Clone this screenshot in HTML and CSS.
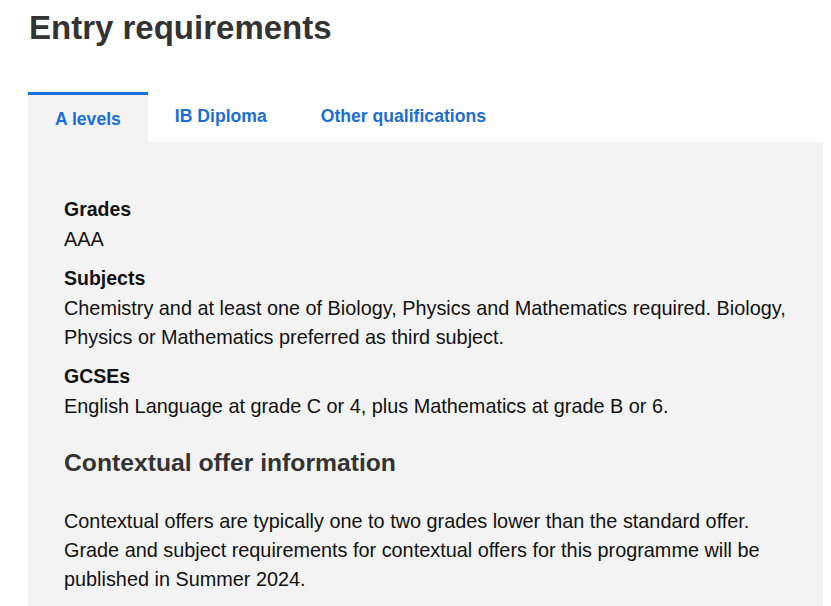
FILE: index.html
```html
<!DOCTYPE html>
<html lang="en">
<head>
<meta charset="utf-8">
<title>Entry requirements</title>
<link rel="stylesheet" href="styles.css">
</head>
<body>
<section class="entry">
  <h1 class="entry-title">Entry requirements</h1>
  <div class="tabs" role="tablist">
    <a class="tab tab-active" role="tab" href="#alevels">A levels</a>
    <a class="tab" role="tab" href="#ib">IB Diploma</a>
    <a class="tab" role="tab" href="#other">Other qualifications</a>
  </div>
  <div class="panel" id="alevels">
    <dl class="reqs">
      <dt>Grades</dt>
      <dd>AAA</dd>
      <dt>Subjects</dt>
      <dd>Chemistry and at least one of Biology, Physics and Mathematics required. Biology, Physics or Mathematics preferred as third subject.</dd>
      <dt>GCSEs</dt>
      <dd>English Language at grade C or 4, plus Mathematics at grade B or 6.</dd>
    </dl>
    <h2 class="panel-heading">Contextual offer information</h2>
    <p class="panel-text">Contextual offers are typically one to two grades lower than the standard offer. Grade and subject requirements for contextual offers for this programme will be published in Summer 2024.</p>
  </div>
</section>
</body>
</html>
```

FILE: styles.css
```css
html, body {
  margin: 0;
  padding: 0;
  background: #ffffff;
}

body {
  font-family: "Liberation Sans", Arial, sans-serif;
  color: #111111;
}

.entry {
  padding-left: 28px;
  width: 795px;
}

.entry-title {
  margin: 0 0 44px 1px;
  padding-top: 8px;
  font-size: 33px;
  line-height: 40px;
  font-weight: 700;
  color: #333333;
}

.tabs {
  display: flex;
  align-items: flex-start;
  height: 50px;
}

.tab {
  box-sizing: border-box;
  height: 50px;
  padding: 14px 27px 0;
  font-size: 17.6px;
  line-height: 20px;
  font-weight: 700;
  color: #1a6ed6;
  text-decoration: none;
}

.tab-active {
  border-top: 3px solid #1a6ed6;
  background: #f3f3f3;
}

.panel {
  background: #f3f3f3;
  padding: 51.7px 33px 40px 36px;
}

.reqs {
  margin: 0;
  font-size: 19.85px;
}

.reqs dt {
  font-size: 19.5px;
  font-weight: 700;
  line-height: 31px;
}

.reqs dd {
  margin: 0 0 8.7px;
  line-height: 29.33px;
}

.panel-heading {
  margin: 26.8px 0 0;
  font-size: 24.7px;
  line-height: 30px;
  font-weight: 700;
  color: #333333;
}

.panel-text {
  margin: 28.5px 0 0;
  font-size: 19.85px;
  line-height: 29.33px;
}
```
